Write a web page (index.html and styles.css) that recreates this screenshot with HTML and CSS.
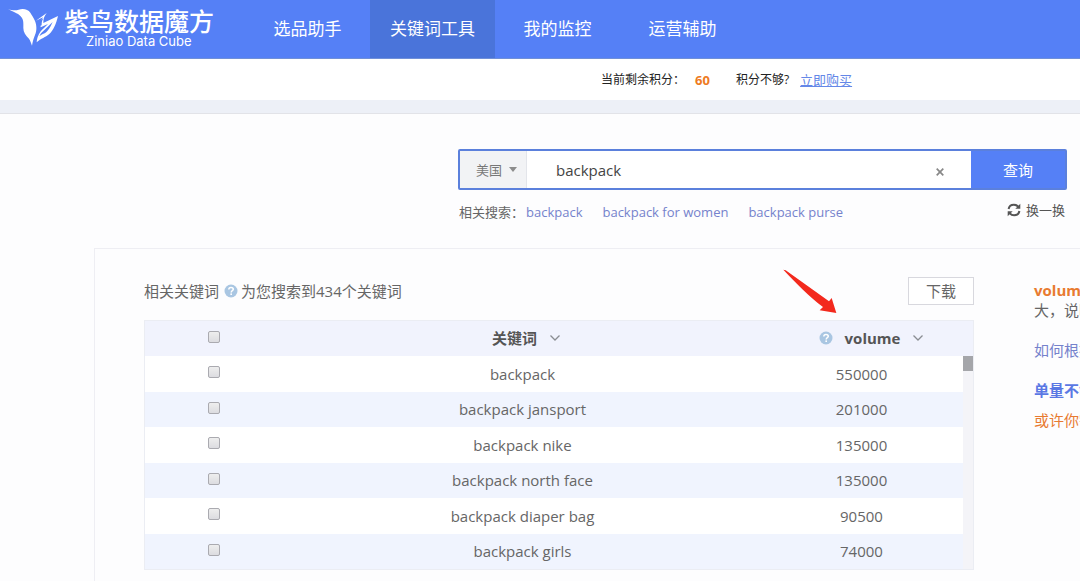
FILE: index.html
```html
<!DOCTYPE html>
<html lang="zh-CN">
<head>
<meta charset="utf-8">
<meta name="viewport" content="width=device-width, initial-scale=1">
<title>紫鸟数据魔方</title>
<link rel="stylesheet" href="styles.css">
</head>
<body>
<svg class="sprite" aria-hidden="true">
  <symbol id="help" viewBox="0 0 14 14">
    <circle cx="7" cy="7" r="6.5" fill="#a9c6e2"/>
    <path d="M4.8 5.6C4.8 4.1 5.8 3.4 7 3.4s2.300.7 2.300 1.900C9.300 6.600 7.200 6.800 7.200 8.400" fill="none" stroke="#fff" stroke-width="1.5"/>
    <rect x="6.400" y="9.400" width="1.600" height="1.600" fill="#fff"/>
  </symbol>
  <symbol id="chevron" viewBox="0 0 12 12">
    <path d="M1.500 3.500 6 8l4.500-4.500" fill="none" stroke="#8a8d92" stroke-width="1.300"/>
  </symbol>
</svg>

<header class="header">
  <a class="logo" href="#">
    <svg class="logo-bird" viewBox="12 12 156 126" aria-hidden="true">
      <path d="M10 14C26 20 34 20 44 17c14-4 28-1 35 9 5 8 9 14 14 25 6 14 5 30 0 42-4 10-7 20-9 32-3-8-5-15-9-21-10-9-17-19-17-32 0-12 1-22-4-30-8-14-24-16-44-28Z" fill="#fff"/>
      <path d="m96 50 32-23c-8 11-10 18-10 30l44-21c-6 24-13 42-27 55-10 9-24 12-37 24 2-18 8-31 22-43l12-12-22 10c-2-11 1-21 7-30Z" fill="#fff"/>
      <path d="m106 52 12-9c-5 8-5 15-5 21l-6 2c-1-5-2-9-1-14ZM118 81l28-27c-8 18-14 27-24 34-8 4-12 5-16 9 2-6 6-11 12-16Z" fill="#5580f6"/>
    </svg>
    <span class="logo-text">
      <span class="logo-name">紫鸟数据魔方</span>
      <span class="logo-sub">Ziniao Data Cube</span>
    </span>
  </a>
  <nav class="nav">
    <a href="#">选品助手</a>
    <a href="#" class="active" aria-current="page">关键词工具</a>
    <a href="#">我的监控</a>
    <a href="#">运营辅助</a>
  </nav>
</header>

<div class="points">
  <span>当前剩余积分：</span>
  <strong>60</strong>
  <span class="ask">积分不够?</span>
  <a href="#">立即购买</a>
</div>

<main>
  <section class="search">
    <form class="search-box">
      <div class="country">
        <select aria-label="国家"><option>美国</option></select>
        <svg class="caret" viewBox="0 0 8 5" aria-hidden="true"><path d="M0 0h8L4 5Z" fill="#8c8c8c"/></svg>
      </div>
      <input type="text" value="backpack" aria-label="关键词">
      <button type="button" class="clear" aria-label="清除">
        <svg viewBox="0 0 8 8" aria-hidden="true"><path d="m.7.7 6.600 6.600M7.300.7.7 7.300" stroke="#888" stroke-width="1.700"/></svg>
      </button>
      <button type="button" class="query">查询</button>
    </form>
    <div class="related">
      <span class="label">相关搜索：</span>
      <a href="#">backpack</a>
      <a href="#">backpack for women</a>
      <a href="#">backpack purse</a>
      <button type="button" class="refresh">
        <svg viewBox="0 0 14 14" aria-hidden="true">
          <path d="M1.600 6C2 3.500 4.200 1.700 6.900 1.700c1.700 0 3.200.7 4.200 1.900M12.400 8c-.4 2.500-2.600 4.300-5.300 4.300-1.700 0-3.200-.7-4.200-1.900" fill="none" stroke="#555" stroke-width="2"/>
          <path d="M13.300.8v5H8.300ZM.7 13.200v-5h5Z" fill="#555"/>
        </svg>
        换一换
      </button>
    </div>
  </section>

  <section class="card">
    <div class="results">
      <div class="results-head">
        <span>相关关键词</span>
        <svg class="help" aria-hidden="true"><use href="#help"/></svg>
        <span>为您搜索到434个关键词</span>
        <button type="button" class="download">下载</button>
      </div>
      <div class="table-wrap">
        <table>
          <colgroup><col class="col-check"><col class="col-word"><col class="col-volume"></colgroup>
          <thead>
            <tr>
              <th><input type="checkbox" aria-label="全选"></th>
              <th><span class="th">关键词<svg class="chevron" aria-hidden="true"><use href="#chevron"/></svg></span></th>
              <th><span class="th"><svg class="help" aria-hidden="true"><use href="#help"/></svg>volume<svg class="chevron" aria-hidden="true"><use href="#chevron"/></svg></span></th>
            </tr>
          </thead>
          <tbody>
            <tr><td><input type="checkbox" aria-label="backpack"></td><td>backpack</td><td>550000</td></tr>
            <tr><td><input type="checkbox" aria-label="backpack jansport"></td><td>backpack jansport</td><td>201000</td></tr>
            <tr><td><input type="checkbox" aria-label="backpack nike"></td><td>backpack nike</td><td>135000</td></tr>
            <tr><td><input type="checkbox" aria-label="backpack north face"></td><td>backpack north face</td><td>135000</td></tr>
            <tr><td><input type="checkbox" aria-label="backpack diaper bag"></td><td>backpack diaper bag</td><td>90500</td></tr>
            <tr><td><input type="checkbox" aria-label="backpack girls"></td><td>backpack girls</td><td>74000</td></tr>
          </tbody>
        </table>
        <div class="scrollbar"><div class="thumb"></div></div>
        <svg class="arrow" viewBox="24 18 168 138" aria-hidden="true">
          <path d="M25 26 32 28 162 121 170 111 184 156 134 148 144 138C105 108 62 66 25 26Z" fill="#f3291d"/>
        </svg>
      </div>
    </div>
    <aside class="tips">
      <strong class="orange">volume</strong>
      <p>大，说明</p>
      <a href="#" class="how">如何根据</a>
      <strong class="blue">单量不够</strong>
      <a href="#" class="orange maybe">或许你需</a>
    </aside>
  </section>
</main>
</body>
</html>
```

FILE: styles.css
```css
* { box-sizing: border-box; }

body {
  margin: 0;
  background: #fdfdfe;
  color: #666;
  font-family: "Open Sans", "Noto Sans CJK SC", sans-serif;
  font-size: 15px;
  line-height: 20px;
  overflow: hidden;
}

a { color: inherit; text-decoration: none; }
button, input, select { font: inherit; color: inherit; }
button { padding: 0; border: 0; background: none; }
svg { display: block; flex: none; }
p { margin: 0; }
.sprite { position: absolute; width: 0; height: 0; }

.header {
  display: flex;
  height: 59px;
  background: #5580f6;
  border-bottom: 1px solid #7090d8;
  color: #fff;
}
.logo { display: flex; width: 245px; padding: 8px 0 0 8px; }
.logo-bird { width: 52px; height: 42px; }
.logo-text { display: flex; flex-direction: column; padding-left: 4px; }
.logo-name { font-size: 25px; font-weight: 500; line-height: 26px; white-space: nowrap; }
.logo-sub { padding-left: 22px; font: 13px/14px Inter, sans-serif; }
.nav { display: flex; }
.nav a {
  width: 125px;
  font-size: 17px;
  line-height: 58px;
  text-align: center;
}
.nav .active { background: #4a74da; }

.points {
  display: flex;
  height: 55px;
  padding: 11px 20px 0 601px;
  background: #fff;
  border-bottom: 1px solid #e2e3e8;
  box-shadow: inset 0 -13px #edf0f7;
  color: #222;
  font-size: 12px;
  white-space: nowrap;
}
.points strong { margin-left: 10px; color: #ee7a22; font-size: 13px; }
.points .ask { margin-left: 26px; }
.points a { margin-left: 11px; color: #6487e8; font-size: 13px; text-decoration: underline; }

.search { padding: 35px 13px 0 458px; }
.search-box {
  display: flex;
  height: 41px;
  border: 2px solid #5b80dc;
  border-radius: 2px;
  background: #fff;
}
.country {
  display: flex;
  align-items: center;
  width: 67px;
  padding: 0 9px 0 16px;
  background: #f2f3f5;
  border-right: 1px solid #e3e5ea;
}
.country select {
  flex: 1;
  width: 33px;
  padding: 0;
  border: 0;
  background: none;
  appearance: none;
  font-size: 13px;
  color: #777;
}
.caret { width: 8px; height: 5px; }
.search-box input {
  flex: 1;
  min-width: 0;
  padding: 0 29px;
  border: 0;
  background: none;
  color: #444;
}
.clear { width: 62px; padding: 5px 0 0 27px; }
.clear svg { width: 8px; height: 8px; }
.query { width: 94px; background: #5580f6; color: #fff; }
.related {
  display: flex;
  align-items: center;
  padding-top: 10px;
  font-size: 13px;
  color: #7582cc;
  white-space: nowrap;
}
.related .label { width: 68px; padding-left: 1px; color: #666; }
.related a { margin-right: 20px; }
.refresh {
  display: flex;
  align-items: center;
  gap: 5px;
  margin-left: auto;
  padding: 0 2px 4px 0;
  color: #555;
}
.refresh svg { width: 14px; height: 14px; }

.card {
  display: flex;
  margin: 24px 0 0 94px;
  min-height: 340px;
  padding: 28px 0 0 49px;
  border: 1px solid #eeeef3;
  border-right: 0;
}
.results { flex: 0 0 830px; }
.results-head { display: flex; align-items: center; height: 28px; }
.help { width: 14px; height: 14px; }
.results-head .help { margin: 0 3px 0 5px; }
.download {
  width: 66px;
  height: 28px;
  margin-left: auto;
  border: 1px solid #d8d8de;
  background: #fff;
}
.table-wrap { position: relative; margin-top: 15px; border: 1px solid #ebedf3; }
table { width: 100%; table-layout: fixed; border-collapse: collapse; background: #fff; }
.col-check { width: 138px; }
.col-volume { width: 211px; }
th, td { padding: 0 0 1px; text-align: center; }
td:last-child { padding-right: 12px; }
thead tr { height: 35px; background: #f1f3fd; }
th { color: #555; }
tbody tr { height: 36px; }
tbody tr:nth-child(even) { height: 35px; background: #f0f4fe; }
.th { display: flex; align-items: center; justify-content: center; gap: 12px; }
.th .chevron { width: 12px; height: 12px; }
th:nth-child(2) .th { padding-left: 8px; }
th:last-child .th { padding-left: 8px; }

input[type="checkbox"] {
  display: block;
  width: 12px;
  height: 12px;
  margin: 0 auto 3px;
  appearance: none;
  border: 1px solid #aaaab0;
  border-radius: 2px;
  background: linear-gradient(#eee, #dcdce0);
}

.scrollbar { position: absolute; top: 35px; right: 0; bottom: 0; width: 10px; background: #f4f4f8; }
.thumb { height: 15px; background: #a5a6aa; }
.arrow { position: absolute; top: -54px; right: 134px; width: 56px; height: 46px; }

.tips {
  display: flex;
  flex: 1;
  flex-direction: column;
  min-width: 0;
  padding: 3px 0 0 60px;
  overflow: hidden;
  white-space: nowrap;
}
.tips .orange { color: #e87a30; }
.tips .how { margin-top: 20px; color: #7582cc; }
.tips .blue { margin-top: 20px; color: #5a78e4; }
.tips .maybe { margin-top: 10px; }
```
